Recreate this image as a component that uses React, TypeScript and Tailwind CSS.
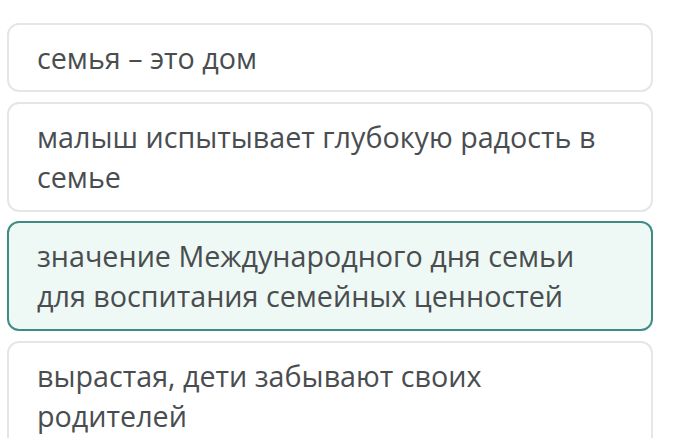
import React from "react";

const OPTIONS = [
  { text: "семья – это дом", selected: false },
  { text: "малыш испытывает глубокую радость в семье", selected: false },
  { text: "значение Международного дня семьи для воспитания семейных ценностей", selected: true },
  { text: "вырастая, дети забывают своих родителей", selected: false },
];

export default function App() {
  return (
    <div
      className="h-[438px] w-[680px] overflow-hidden bg-white pt-[23px] pl-[7px] pr-[27px]"
      style={{ fontFamily: '"Open Sans", "Noto Sans", sans-serif' }}
    >
      <div className="flex flex-col gap-[9.5px]">
        {OPTIONS.map((o, i) => (
          <div
            key={o.text}
            className={
              o.selected
                ? "rounded-[12px] border-2 border-[#3f8c85] bg-[#eef9f5] px-[28px] pt-[13px] pb-[13px]"
                : i === 0
                ? "rounded-[12px] border-2 border-[#e4e6e8] bg-white px-[28px] pt-[13px] pb-[12px]"
                : "rounded-[12px] border-2 border-[#e4e6e8] bg-white px-[28px] pt-[13px] pb-[13px]"
            }
          >
            <p className="text-[28.7px] leading-[40px] text-[#4a4d50]">{o.text}</p>
          </div>
        ))}
      </div>
    </div>
  );
}
